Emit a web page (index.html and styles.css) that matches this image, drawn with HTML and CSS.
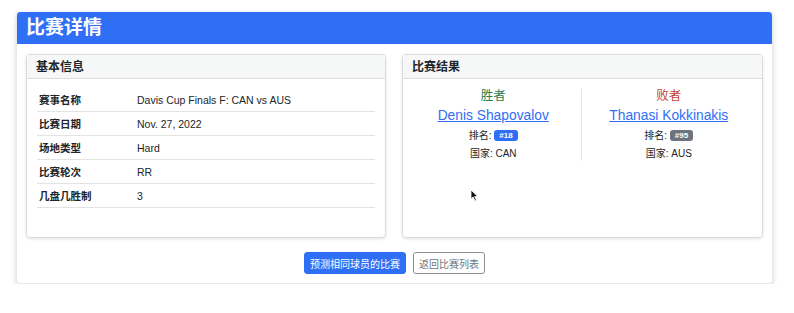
FILE: index.html
```html
<!DOCTYPE html>
<html lang="zh-CN">
<head>
    <meta charset="UTF-8">
    <meta name="viewport" content="width=device-width, initial-scale=1.0">
    <title>比赛详情</title>
    <link rel="stylesheet" href="styles.css">
</head>
<body>
    <!-- Main match detail card -->
    <div class="main-card">
        <div class="main-header">比赛详情</div>
        <div class="main-body">
            <div class="card-row">
                <!-- Basic info -->
                <div class="card">
                    <div class="card-header">基本信息</div>
                    <div class="card-body">
                        <table class="info-table">
                            <tr><th>赛事名称</th><td>Davis Cup Finals F: CAN vs AUS</td></tr>
                            <tr><th>比赛日期</th><td>Nov. 27, 2022</td></tr>
                            <tr><th>场地类型</th><td>Hard</td></tr>
                            <tr><th>比赛轮次</th><td>RR</td></tr>
                            <tr><th>几盘几胜制</th><td>3</td></tr>
                        </table>
                    </div>
                </div>

                <!-- Result -->
                <div class="card">
                    <div class="card-header">比赛结果</div>
                    <div class="card-body result-body">
                        <div class="player player-left">
                            <div class="role winner">胜者</div>
                            <a href="#" class="player-name">Denis Shapovalov</a>
                            <div class="meta">排名: <span class="badge badge-blue">#18</span></div>
                            <div class="meta">国家: CAN</div>
                        </div>
                        <div class="player">
                            <div class="role loser">败者</div>
                            <a href="#" class="player-name">Thanasi Kokkinakis</a>
                            <div class="meta">排名: <span class="badge badge-gray">#95</span></div>
                            <div class="meta">国家: AUS</div>
                        </div>
                    </div>
                </div>
            </div>

            <div class="actions">
                <button class="btn btn-primary">预测相同球员的比赛</button>
                <button class="btn btn-outline">返回比赛列表</button>
            </div>
        </div>
    </div>

    <!-- mouse pointer captured in the screenshot -->
    <svg class="cursor" width="9" height="13" viewBox="0 0 9 13">
        <path d="M1 1 L1 10 L3.2 8 L5 12 L6.4 11.3 L4.7 7.5 L7.8 7.5 Z" fill="#111" stroke="#fff" stroke-width="0.8"/>
    </svg>
</body>
</html>
```

FILE: styles.css
```css
/* Page */
body {
    margin: 0;
    padding: 12px 21px 0 16px;
    background: #fff;
    font-family: "Liberation Sans", "Noto Sans CJK SC", sans-serif;
    color: #212529;
    font-size: 11px;
}

.main-card {
    border-radius: 4px;
    background: #fff;
    border: 1px solid #e8e8e8;
    border-top: none;
    box-shadow: 0 2px 5px rgba(0, 0, 0, 0.16);
    overflow: hidden;
}

.main-header {
    background-color: #2f6ff5;
    color: #fff;
    font-size: 19px;
    font-weight: bold;
    height: 32px;
    line-height: 31px;
    padding-left: 10px;
    margin: 0 -1px;
}

.main-body {
    padding: 10px 9px 9px 9px;
}

.card-row {
    display: grid;
    grid-template-columns: 360px 361px;
    gap: 16px;
}

.card {
    border: 1px solid #dcdcdc;
    border-radius: 4px;
    height: 184px;
    box-sizing: border-box;
    box-shadow: 0 1px 3px rgba(0, 0, 0, 0.12);
    overflow: hidden;
}

.card-header {
    background: #f6f7f7;
    border-bottom: 1px solid #dcdcdc;
    height: 23px;
    line-height: 24px;
    padding-left: 9px;
    font-size: 12px;
    font-weight: bold;
}

.card-body {
    padding: 9px 10px 10px;
}

/* Basic info table */
.info-table {
    width: 100%;
    border-collapse: collapse;
}

.info-table th,
.info-table td {
    height: 23px;
    border-bottom: 1px solid #e3e3e3;
    text-align: left;
    font-size: 10.5px;
    padding: 0 0 0 2px;
}

.info-table th {
    width: 96px;
    font-weight: bold;
}

/* Result */
.result-body {
    display: flex;
    padding: 10px 6px 10px 3px;
}

.player {
    flex: 1;
    text-align: center;
    height: 72px;
}

.player-left {
    border-right: 1px solid #e6e6e6;
}

.role {
    font-size: 12.5px;
    line-height: 14px;
}

.winner {
    color: #2e7d4f;
}

.loser {
    color: #c43f36;
}

.player-name {
    display: block;
    color: #2f6ff5;
    font-size: 13.8px;
    line-height: 18px;
    margin-top: 4px;
}

.meta {
    font-size: 10px;
    line-height: 14px;
    margin-top: 4px;
}

.badge {
    display: inline-block;
    color: #fff;
    font-size: 8px;
    font-weight: bold;
    line-height: 11px;
    padding: 0 5px;
    border-radius: 3px;
    vertical-align: 1px;
}

.badge-blue {
    background: #2f6ff5;
}

.badge-gray {
    background: #6c757d;
}

/* Buttons */
.actions {
    display: flex;
    justify-content: center;
    gap: 7px;
    margin-top: 14px;
}

.btn {
    font-family: inherit;
    font-size: 10px;
    height: 22px;
    padding: 0 5px;
    border-radius: 3px;
    cursor: pointer;
}

.btn-primary {
    background: #2f6ff5;
    border: 1px solid #2f6ff5;
    color: #fff;
}

.btn-outline {
    background: #fff;
    border: 1px solid #8a8f94;
    color: #6c757d;
}

.cursor {
    position: absolute;
    left: 470px;
    top: 189px;
}
```
